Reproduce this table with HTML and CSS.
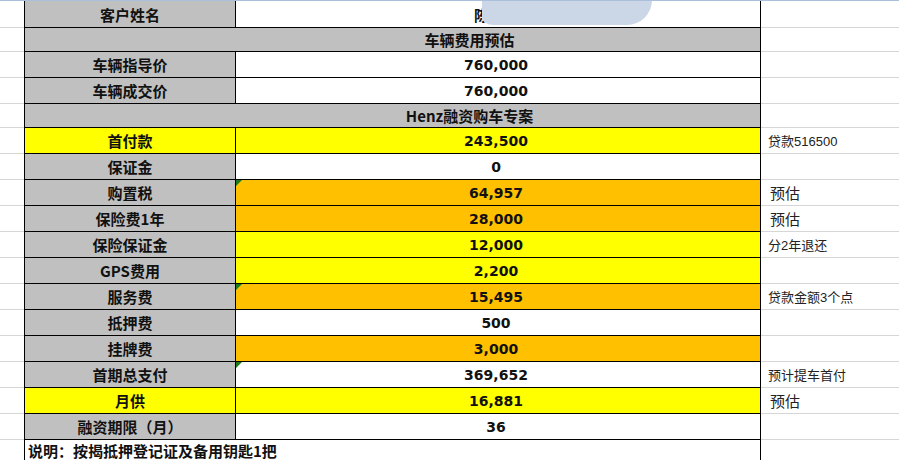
FILE: index.html
```html
<!DOCTYPE html>
<html lang="zh">
<head>
<meta charset="utf-8">
<title>车辆费用预估</title>
<link rel="stylesheet" href="styles.css">
</head>
<body>
<div class="sheet">
  <div class="a"></div><div class="b gray">客户姓名</div><div class="c name"><span class="nm">陈</span><span class="blob"></span></div><div class="d"></div>
  <div class="a"></div><div class="bc gray head">车辆费用预估</div><div class="d"></div>
  <div class="a"></div><div class="b gray">车辆指导价</div><div class="c num">760,000</div><div class="d"></div>
  <div class="a"></div><div class="b gray">车辆成交价</div><div class="c num">760,000</div><div class="d"></div>
  <div class="a"></div><div class="bc gray head">Henz融资购车专案</div><div class="d"></div>
  <div class="a"></div><div class="b yellow">首付款</div><div class="c num yellow">243,500</div><div class="d note">贷款516500</div>
  <div class="a"></div><div class="b gray">保证金</div><div class="c num">0</div><div class="d"></div>
  <div class="a"></div><div class="b gray">购置税</div><div class="c num orange tri">64,957</div><div class="d note big">预估</div>
  <div class="a"></div><div class="b gray">保险费1年</div><div class="c num orange">28,000</div><div class="d note big">预估</div>
  <div class="a"></div><div class="b gray">保险保证金</div><div class="c num yellow">12,000</div><div class="d note">分2年退还</div>
  <div class="a"></div><div class="b gray">GPS费用</div><div class="c num yellow">2,200</div><div class="d"></div>
  <div class="a"></div><div class="b gray">服务费</div><div class="c num orange tri">15,495</div><div class="d note">贷款金额3个点</div>
  <div class="a"></div><div class="b gray">抵押费</div><div class="c num">500</div><div class="d"></div>
  <div class="a"></div><div class="b gray">挂牌费</div><div class="c num orange">3,000</div><div class="d"></div>
  <div class="a"></div><div class="b gray">首期总支付</div><div class="c num tri">369,652</div><div class="d note">预计提车首付</div>
  <div class="a"></div><div class="b yellow">月供</div><div class="c num yellow">16,881</div><div class="d note big">预估</div>
  <div class="a"></div><div class="b gray">融资期限（月）</div><div class="c num">36</div><div class="d"></div>
  <div class="a"></div><div class="bc foot">说明：按揭抵押登记证及备用钥匙1把</div><div class="d"></div>
</div>
</body>
</html>
```

FILE: styles.css
```css
html, body {
  margin: 0;
  padding: 0;
  background: #ffffff;
}

.sheet {
  display: grid;
  grid-template-columns: 24px 212px 525px 1fr;
  grid-template-rows: 27px 24px 26px 26px 24px 26px 26px 26px 26px 26px 26px 26px 26px 26px 26px 26px 26px 21px;
  border-top: 1px solid #aabfd9;
  width: 899px;
  height: 460px;
  box-sizing: border-box;
  overflow: hidden;
  font-family: "Noto Sans CJK SC", sans-serif;
  color: #111;
}

.a, .d {
  box-sizing: border-box;
  border-bottom: 1px solid #d6d6d6;
  background: #fff;
}

.b, .c, .bc {
  box-sizing: border-box;
  border-bottom: 1px solid #000;
  border-right: 1px solid #000;
  display: flex;
  align-items: center;
  justify-content: center;
}

.b, .bc {
  border-left: 1px solid #000;
}

.bc {
  grid-column: span 2;
}

.b, .bc {
  font-size: 15px;
  font-weight: 700;
}

.gray { background: #c0c0c0; }
.yellow { background: #ffff00; }
.orange { background: #ffc000; }

.head {
  padding-left: 154px;
}

.num {
  font-family: "DejaVu Sans", "Noto Sans CJK SC", sans-serif;
  font-weight: 700;
  font-size: 14px;
  padding-right: 4px;
}

.tri {
  position: relative;
}

.tri::before {
  content: "";
  position: absolute;
  left: 0;
  top: 0;
  width: 0;
  height: 0;
  border-top: 6px solid #1c7c1c;
  border-right: 6px solid transparent;
}

.name {
  position: relative;
  justify-content: flex-start;
  padding-left: 238px;
  font-size: 15px;
  font-weight: 700;
}

.blob {
  position: absolute;
  left: 246px;
  top: -1px;
  width: 170px;
  height: 25px;
  background: #cbd7e6;
  border-radius: 0 0 26px 12px / 0 0 26px 8px;
}

.note {
  display: flex;
  align-items: center;
  padding-left: 7px;
  font-size: 13px;
  font-family: "Liberation Sans", "Noto Sans CJK SC", sans-serif;
  color: #222;
}

.note.big {
  font-size: 15px;
  padding-left: 9px;
}

.foot {
  justify-content: flex-start;
  align-items: center;
  padding-left: 3px;
  border-bottom: none;
  line-height: 18px;
}
```
